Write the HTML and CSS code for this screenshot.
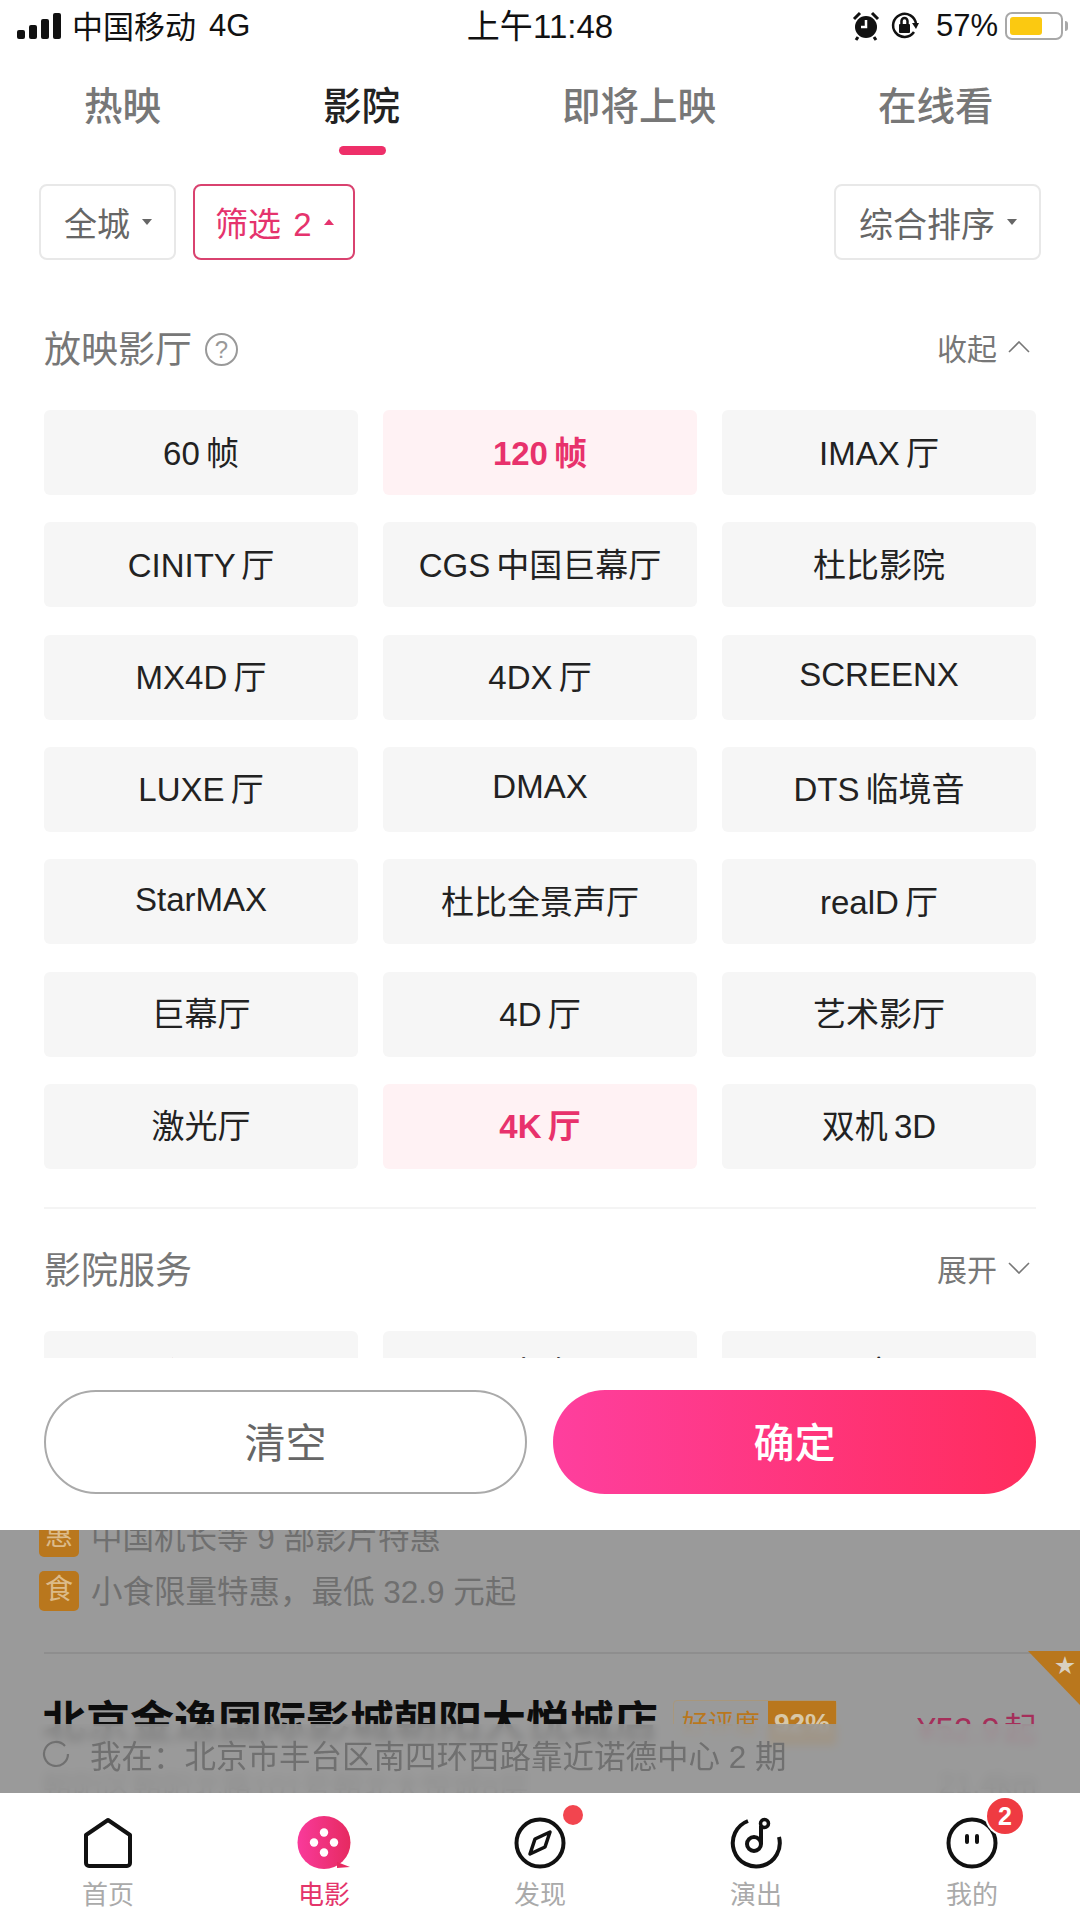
FILE: index.html
```html
<!DOCTYPE html>
<html lang="zh-CN">
<head>
    <meta charset="UTF-8">
    <meta name="viewport" content="width=device-width, initial-scale=1.0">
    <title>影院筛选</title>
    <link rel="stylesheet" href="styles.css">
</head>
<body>
<div class="page">

    <!-- white filter sheet -->
    <div class="sheet">
        <div class="status-bar">
            <div class="status-left">
                <svg class="signal" viewBox="0 0 44 26" width="44" height="26">
                    <rect x="0" y="17" width="8" height="9" rx="2"/>
                    <rect x="12" y="12" width="8" height="14" rx="2"/>
                    <rect x="24" y="6" width="8" height="20" rx="2"/>
                    <rect x="36" y="0" width="8" height="26" rx="2"/>
                </svg>
                <span class="cn">中国移动</span>
                <span>4G</span>
            </div>
            <div class="status-time">上午 11:48</div>
            <div class="status-right">
                <svg class="alarm" viewBox="0 0 28 30" width="28" height="30">
                    <circle cx="14" cy="16" r="11"/>
                    <path d="M2 8 L8 2 M26 8 L20 2 M6 26 L4 29 M22 26 L24 29" class="alarm-legs"/>
                    <path d="M14 9 V16 H9" class="alarm-hand"/>
                </svg>
                <svg class="rotlock" viewBox="0 0 30 30" width="30" height="30">
                    <path d="M24 21 A11.5 11.5 0 1 1 26 13" class="rot-arc"/>
                    <path d="M22 12 L29 12 L26 18 Z"/>
                    <rect x="9" y="13" width="11" height="9" rx="1"/>
                    <path d="M11.5 13 V10 a3 3 0 0 1 6 0 V13" class="rot-shackle"/>
                </svg>
                <span class="percent">57%</span>
                <div class="battery"><div class="battery-fill"></div></div>
                <div class="battery-nub"></div>
            </div>
        </div>

        <div class="tabs">
            <div class="tab">热映</div>
            <div class="tab active">影院</div>
            <div class="tab">即将上映</div>
            <div class="tab">在线看</div>
        </div>

        <div class="filters">
            <div class="filter city">全城<i class="caret"></i></div>
            <div class="filter picked">筛选 2<i class="caret up"></i></div>
            <div class="filter sort">综合排序<i class="caret"></i></div>
        </div>

        <div class="section-head">
            <div class="section-title">放映影厅<span class="help">?</span></div>
            <div class="section-toggle">收起
                <svg class="chev" viewBox="0 0 22 12" width="22" height="12"><path d="M1 11 L11 1 L21 11"/></svg>
            </div>
        </div>

        <div class="grid">
            <div class="cell">60 帧</div>
            <div class="cell on">120 帧</div>
            <div class="cell">IMAX 厅</div>
            <div class="cell">CINITY 厅</div>
            <div class="cell">CGS 中国巨幕厅</div>
            <div class="cell">杜比影院</div>
            <div class="cell">MX4D 厅</div>
            <div class="cell">4DX 厅</div>
            <div class="cell">SCREENX</div>
            <div class="cell">LUXE 厅</div>
            <div class="cell">DMAX</div>
            <div class="cell">DTS 临境音</div>
            <div class="cell">StarMAX</div>
            <div class="cell">杜比全景声厅</div>
            <div class="cell">realD 厅</div>
            <div class="cell">巨幕厅</div>
            <div class="cell">4D 厅</div>
            <div class="cell">艺术影厅</div>
            <div class="cell">激光厅</div>
            <div class="cell on">4K 厅</div>
            <div class="cell">双机 3D</div>
        </div>

        <div class="divider"></div>

        <div class="section-head second">
            <div class="section-title">影院服务</div>
            <div class="section-toggle">展开
                <svg class="chev" viewBox="0 0 22 12" width="22" height="12"><path d="M1 1 L11 11 L21 1"/></svg>
            </div>
        </div>

        <div class="grid clipped">
            <div class="cell">退票</div>
            <div class="cell">小吃</div>
            <div class="cell">儿童票</div>
        </div>

        <div class="actions">
            <div class="btn clear">清空</div>
            <div class="btn ok">确定</div>
        </div>
    </div>

    <!-- cinema list dimmed behind the sheet -->
    <div class="dim">
        <div class="list">
            <div class="promo"><span class="promo-tag">惠</span>中国机长等 9 部影片特惠</div>
            <div class="promo"><span class="promo-tag">食</span>小食限量特惠，最低 32.9 元起</div>
            <div class="card">
                <div class="card-row">
                    <div class="card-name">北京金逸国际影城朝阳大悦城店</div>
                    <div class="score"><span class="score-label">好评度</span><span class="score-num">92%</span></div>
                    <div class="price">¥52.9 起</div>
                </div>
                <div class="card-row addr">
                    <div>朝阳区朝阳北路101号朝北大悦城8层</div>
                    <div>21.4km</div>
                </div>
            </div>
        </div>
        <div class="corner"><span>★</span></div>
        <div class="locate">
            <svg class="loc-icon" viewBox="0 0 28 28" width="28" height="28">
                <path d="M23 6 A12 12 0 1 0 26 14"/>
            </svg>
            <span>我在：北京市丰台区南四环西路靠近诺德中心 2 期</span>
        </div>
    </div>

    <!-- bottom navigation -->
    <div class="nav">
        <div class="nav-item">
            <svg class="nav-icon" viewBox="0 0 52 52" width="52" height="52">
                <path class="line" d="M26 3 L48 18 V46 a3 3 0 0 1 -3 3 H7 a3 3 0 0 1 -3 -3 V18 Z"/>
            </svg>
            <span>首页</span>
        </div>
        <div class="nav-item active">
            <svg class="nav-icon" viewBox="0 0 54 54" width="54" height="54">
                <defs>
                    <linearGradient id="movieFill" x1="0" y1="0" x2="1" y2="0">
                        <stop offset="0" stop-color="#f93a9b"/>
                        <stop offset="1" stop-color="#e62a60"/>
                    </linearGradient>
                </defs>
                <circle cx="27" cy="26.5" r="26.5" fill="url(#movieFill)"/>
                <path d="M40 46 L53 51 L40 52 Z" fill="#e62a60"/>
                <circle cx="27" cy="16.5" r="4.2" fill="#fff"/>
                <circle cx="27" cy="36.5" r="4.2" fill="#fff"/>
                <circle cx="17" cy="26.5" r="4.2" fill="#fff"/>
                <circle cx="37" cy="26.5" r="4.2" fill="#fff"/>
            </svg>
            <span>电影</span>
        </div>
        <div class="nav-item">
            <svg class="nav-icon" viewBox="0 0 52 52" width="52" height="52">
                <circle class="line" cx="26" cy="26" r="23.5"/>
                <path class="line thin" d="M36 15 L31 30 L16 37 L21 22 Z"/>
            </svg>
            <span>发现</span>
            <i class="dot"></i>
        </div>
        <div class="nav-item">
            <svg class="nav-icon" viewBox="0 0 52 52" width="52" height="52">
                <path class="line" d="M18 4 A23.5 23.5 0 1 0 49 20"/>
                <circle class="line" cx="24" cy="27" r="7"/>
                <path class="line" d="M31 27 V9"/>
                <circle class="line thin" cx="34.5" cy="6.5" r="4"/>
            </svg>
            <span>演出</span>
        </div>
        <div class="nav-item">
            <svg class="nav-icon" viewBox="0 0 52 52" width="52" height="52">
                <circle class="line" cx="26" cy="26" r="23.5"/>
                <path class="line eye" d="M21 19 V25 M31 19 V25"/>
            </svg>
            <span>我的</span>
            <i class="badge">2</i>
        </div>
    </div>

</div>
</body>
</html>
```

FILE: styles.css
```css
* {
    box-sizing: border-box;
}

html, body {
    margin: 0;
    padding: 0;
    background: #fff;
}

body {
    font-family: "Liberation Sans", "Noto Sans CJK SC", sans-serif;
    color: #222;
}

.page {
    width: 1080px;
    height: 1920px;
    display: flex;
    flex-direction: column;
    overflow: hidden;
}

/* ---------- sheet ---------- */
.sheet {
    height: 1530px;
    flex: none;
    background: #fff;
}

.status-bar {
    height: 52px;
    display: grid;
    grid-template-columns: 1fr auto 1fr;
    align-items: center;
    font-size: 31px;
    color: #111;
}

.status-left {
    display: flex;
    align-items: center;
    gap: 13px;
    padding-left: 17px;
}

.status-left .cn {
    margin-left: -2px;
    padding-bottom: 4px;
}

.signal {
    fill: #111;
}

.status-time {
    padding-bottom: 4px;
    font-size: 33px;
    word-spacing: -9px;
}

.status-right {
    display: flex;
    align-items: center;
    justify-content: flex-end;
    padding-right: 12px;
}

.alarm {
    fill: #111;
    margin-right: 10px;
}

.alarm-legs {
    fill: none;
    stroke: #111;
    stroke-width: 3;
}

.alarm-hand {
    fill: none;
    stroke: #fff;
    stroke-width: 2.5;
}

.rotlock {
    fill: #111;
    margin-right: 16px;
}

.rot-arc, .rot-shackle {
    fill: none;
    stroke: #111;
    stroke-width: 2.5;
}

.percent {
    margin-right: 7px;
}

.battery {
    width: 58px;
    height: 28px;
    padding: 3px;
    border: 2px solid #a8a8a8;
    border-radius: 7px;
}

.battery-fill {
    width: 32px;
    height: 100%;
    border-radius: 3px;
    background: #fbc911;
}

.battery-nub {
    width: 3px;
    height: 10px;
    margin-left: 2px;
    border-radius: 0 3px 3px 0;
    background: #a8a8a8;
}

.tabs {
    height: 132px;
    display: flex;
    gap: 162px;
    padding: 31px 0 0 84px;
}

.tab {
    position: relative;
    height: 48px;
    line-height: 48px;
    font-size: 38.5px;
    font-weight: 500;
    color: #777;
}

.tab.active {
    color: #222;
}

.tab.active::after {
    content: '';
    position: absolute;
    left: 16px;
    top: 63px;
    width: 47px;
    height: 9px;
    border-radius: 5px;
    background: #ee2f69;
}

.filters {
    display: flex;
    gap: 17px;
    padding: 0 39px;
}

.filter {
    height: 76px;
    display: flex;
    align-items: center;
    padding: 0 22px 0 23px;
    font-size: 33px;
    color: #666;
    border: 2px solid #e8e8e8;
    border-radius: 8px;
}

.filter.picked {
    padding: 0 19px 0 20px;
    color: #e5336d;
    border-color: #d9426f;
    word-spacing: 3px;
}

.filter.sort {
    margin-left: auto;
    font-size: 34px;
}

.caret {
    margin-left: 12px;
    width: 0;
    height: 0;
    border-left: 5px solid transparent;
    border-right: 5px solid transparent;
    border-top: 6px solid #666;
}

.caret.up {
    border-top: 0;
    border-bottom: 6px solid #e5336d;
}

.section-head {
    height: 50px;
    margin-top: 64px;
    padding: 0 50px 4px 44px;
    display: flex;
    align-items: center;
    justify-content: space-between;
}

.section-head.second {
    margin-top: 36px;
}

.section-title {
    display: flex;
    align-items: center;
    font-size: 37px;
    color: #777;
}

.help {
    width: 33px;
    height: 33px;
    margin: 4px 0 0 13px;
    border: 2px solid #999;
    border-radius: 50%;
    font-size: 24px;
    line-height: 29px;
    text-align: center;
    color: #999;
}

.section-toggle {
    display: flex;
    align-items: center;
    gap: 11px;
    font-size: 30px;
    color: #777;
}

.chev {
    fill: none;
    stroke: #777;
    stroke-width: 1.6;
}

.grid {
    margin-top: 36px;
    padding: 0 44px;
    display: grid;
    grid-template-columns: repeat(3, 314px);
    grid-auto-rows: 85px;
    column-gap: 25px;
    row-gap: 27.33px;
}

.grid.clipped {
    height: 27px;
    overflow: hidden;
}

.cell {
    display: flex;
    align-items: center;
    justify-content: center;
    padding-bottom: 4px;
    border-radius: 6px;
    background: #f6f6f6;
    font-size: 33px;
    color: #222;
    word-spacing: -3px;
}

.cell.on {
    background: #fff2f4;
    color: #e8326c;
    font-weight: 700;
}

.divider {
    height: 2px;
    margin: 38px 44px 0;
    background: #f4f4f4;
}

.actions {
    display: flex;
    gap: 26px;
    margin-top: 32px;
    padding: 0 44px;
}

.btn {
    width: 483px;
    height: 104px;
    padding-bottom: 4px;
    display: flex;
    align-items: center;
    justify-content: center;
    border-radius: 52px;
    font-size: 41px;
}

.btn.clear {
    border: 2px solid #aaa;
    color: #666;
}

.btn.ok {
    background: linear-gradient(90deg, #fe3f9e, #ff2c5d);
    color: #fff;
    font-weight: 500;
}

/* ---------- dimmed list ---------- */
.dim {
    position: relative;
    height: 263px;
    flex: none;
    overflow: hidden;
    background: #9a9a9a;
}

.list {
    margin-top: -13px;
    padding-left: 39px;
}

.promo {
    display: flex;
    align-items: center;
    gap: 12px;
    height: 40px;
    margin-bottom: 14px;
    padding-bottom: 5px;
    font-size: 31.5px;
    color: #6f6f6f;
}

.promo-tag {
    align-self: flex-start;
    flex: none;
    width: 40px;
    height: 40px;
    border-radius: 5px;
    background: #b9771d;
    font-size: 28px;
    line-height: 38px;
    text-align: center;
    color: #dcbb8a;
}

.card {
    margin: 41px 0 0 5px;
    padding: 43px 43px 0 0;
    border-top: 2px solid #8e8e8e;
}

.card-row {
    display: flex;
    align-items: center;
    height: 52px;
    margin-left: -2px;
}

.card-name {
    font-size: 44px;
    line-height: 52px;
    font-weight: 700;
    color: #0d0d0d;
}

.score {
    display: flex;
    width: 164px;
    height: 46px;
    margin-left: 15px;
    border: 1px solid #a8977c;
    border-radius: 4px;
    font-size: 26px;
    line-height: 46px;
    color: #b9771d;
}

.score-label {
    width: 94px;
    text-align: center;
}

.score-num {
    flex: 1;
    background: #b9771d;
    font-size: 28px;
    font-weight: 700;
    text-align: center;
    color: #d8c8a8;
}

.price {
    margin-left: auto;
    padding-top: 7px;
    font-size: 33px;
    color: #a52f5a;
    word-spacing: -5px;
}

.card-row.addr {
    justify-content: space-between;
    margin-top: 9px;
    font-size: 30px;
    color: #555;
}

/* corner ribbon sits over the list */
.corner {
    position: absolute;
    top: 121px;
    right: 0;
    width: 52px;
    height: 54px;
    background: #b9771d;
    clip-path: polygon(0 0, 100% 0, 100% 100%);
}

.corner span {
    position: absolute;
    top: -1px;
    right: 5px;
    font-size: 20px;
    color: #d9d0c0;
}

/* frosted location bar over the list */
.locate {
    position: absolute;
    left: 0;
    right: 0;
    bottom: 0;
    height: 69px;
    padding: 0 0 10px 42px;
    display: flex;
    align-items: center;
    gap: 20px;
    background: rgba(154, 154, 154, 0.85);
    -webkit-backdrop-filter: blur(4px);
    backdrop-filter: blur(4px);
    font-size: 31.5px;
    color: #707070;
}

.loc-icon {
    fill: none;
    stroke: #707070;
    stroke-width: 2.2;
}

/* ---------- bottom nav ---------- */
.nav {
    flex: 1;
    display: grid;
    grid-template-columns: repeat(5, 1fr);
    background: #fff;
}

.nav-item {
    position: relative;
    display: flex;
    flex-direction: column;
    align-items: center;
    padding-top: 23px;
    font-size: 26px;
    line-height: 34px;
    color: #aaa;
}

.nav-item.active {
    color: #e4356b;
}

.nav-icon {
    height: 54px;
    margin-bottom: 8px;
}

.line {
    fill: none;
    stroke: #111;
    stroke-width: 4;
    stroke-linejoin: round;
}

.line.thin {
    stroke-width: 3.5;
}

.line.eye {
    stroke-linecap: round;
}

.dot {
    position: absolute;
    top: 12px;
    left: 131px;
    width: 20px;
    height: 20px;
    border-radius: 50%;
    background: #f2454f;
}

.badge {
    position: absolute;
    top: 5px;
    left: 123px;
    width: 36px;
    height: 36px;
    border-radius: 50%;
    background: #ef3b42;
    box-shadow: 0 0 0 2px #fff;
    font-style: normal;
    font-size: 25px;
    font-weight: 700;
    line-height: 36px;
    text-align: center;
    color: #fff;
}
```
